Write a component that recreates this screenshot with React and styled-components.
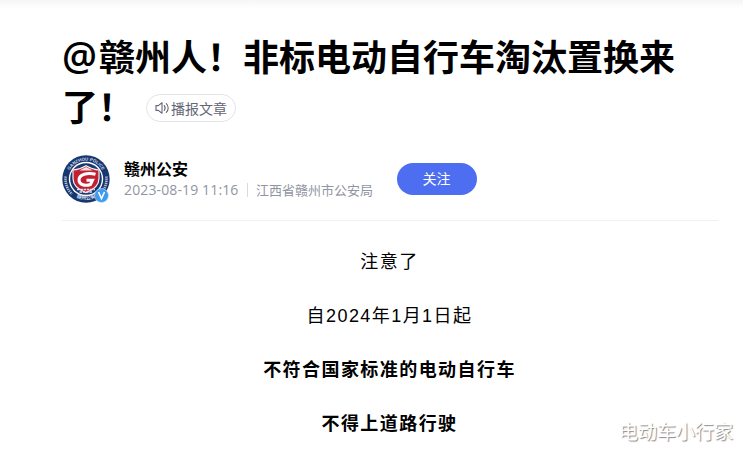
import React from 'react';
import styled, { createGlobalStyle } from "styled-components"

const GlobalStyle = createGlobalStyle`
  *{
    box-sizing: border-box;
  }
  body{
    margin: 0;
    background: #fff;
    color: #000;
    font-family: "Liberation Sans", "Noto Sans CJK SC", sans-serif;
    overflow: hidden;
  }
`

const SpeakerIcon = () => (
  <svg width="15" height="14" viewBox="0 0 15 14" fill="none" stroke="#626675" strokeWidth="1.1" strokeLinejoin="round" strokeLinecap="round">
    <path d="M1 4.6h2.3L7 1.7v10.6L3.3 9.4H1z" />
    <path d="M9.2 4.7c1.1 1.3 1.1 3.3 0 4.6" />
    <path d="M11.3 2.6c2.5 2.4 2.5 6.4 0 8.8" />
  </svg>
)

const PoliceBadge = () => (
  <svg width="48" height="48" viewBox="0 0 48 48">
    <defs>
      <path id="top-arc" d="M5.5 24a18.5 18.5 0 0 1 37 0" />
      <path id="bottom-arc" d="M12 41a21 21 0 0 0 24 0" />
    </defs>
    <circle cx="24" cy="24" r="23.7" fill="#17376f" />
    <circle cx="24" cy="24" r="17.2" fill="#fff" />
    <circle cx="24" cy="24" r="15.8" fill="#17376f" />
    <g fill="#d6dcea" fontFamily="Liberation Sans, sans-serif" fontWeight="700" fontSize="4.4">
      <text><textPath href="#top-arc" startOffset="50%" textAnchor="middle">GANZHOU POLICE</textPath></text>
      <text fontFamily="Noto Sans CJK SC, sans-serif" fontSize="5">
        <textPath href="#bottom-arc" startOffset="50%" textAnchor="middle">赣州公安</textPath>
      </text>
    </g>
    {/* lettering on both sides of the ring */}
    <g fill="none" stroke="#b4bfd6" strokeWidth="2.600" strokeDasharray="1.300 .8">
      <path d="M3.700 21.500A20.400 20.400 0 0 0 10 39" />
      <path d="M44.300 21.500A20.400 20.400 0 0 1 40 37" />
    </g>
    <path d="M11 15c5-.2 8.500-1.500 13-4.200 4.500 2.700 8 4 13 4.200v8.500c0 7-6 11.500-13 14.200C17 35 11 30.500 11 23.500z" fill="#c31f32" stroke="#f3f0f3" strokeWidth="1.200" />
    <path d="M17.500 15.500h13l-2.500-1.500-2-1-2-1-2 1-2 1z" fill="#f3dfe4" />
    <path d="M33.500 19.300C25.500 17 17 19.500 17 25c0 4.800 6 6.300 11.500 4.500l2-4.300H24.500" fill="none" stroke="#fff" strokeWidth="3" />
    <path d="M15 34.500h18M17.500 37h13" stroke="#e8e8ee" strokeWidth="1.500" strokeDasharray="2.500 .8" />
  </svg>
)

const Article = () => {
  return (
    <Page>
      <GlobalStyle />
      <TopShade />
      <Main>
        <Title>
          <At>@</At>赣州人！非标电动自行车淘汰置换来了！
          <Listen><SpeakerIcon />播报文章</Listen>
        </Title>
        <AuthorRow>
          <Avatar>
            <PoliceBadge />
            <Verified>
              <svg width="15" height="15" viewBox="0 0 15 15">
                <circle cx="7.500" cy="7.500" r="7" fill="#3d9cf0" stroke="#d9edff" strokeWidth=".6" />
                <path d="M4.500 4l3 6.500L10.500 4" fill="none" stroke="#fff" strokeWidth="1.600" />
              </svg>
            </Verified>
          </Avatar>
          <Author>
            <Name>赣州公安</Name>
            <Meta>
              <Time>2023-08-19 11:16</Time>
              <Divider />
              <span>江西省赣州市公安局</span>
            </Meta>
          </Author>
          <Follow>关注</Follow>
        </AuthorRow>
        <Content>
          <Paragraph>注意了</Paragraph>
          <Paragraph>自2024年1月1日起</Paragraph>
          <Paragraph $bold>不符合国家标准的电动自行车</Paragraph>
          <Paragraph $bold>不得上道路行驶</Paragraph>
        </Content>
      </Main>
      <Watermark>电动车小行家</Watermark>
    </Page>
  );
}

const Page = styled.div`
  position: relative;
  height: 452px;
  overflow: hidden;
`

const TopShade = styled.div`
  height: 8px;
  background: linear-gradient(#f6f6f6, #f9f9f9 40%, #fff);
`

const Main = styled.main`
  width: 656px;
  margin: 22px 0 0 62px;
`

const Title = styled.h1`
  height: 100px;
  margin: 0;
  font: 700 36px/50px "Noto Sans CJK SC", sans-serif;
  word-break: break-all;
`

const At = styled.span`
  display: inline-block;
  width: 37px;
  font-family: "Open Sans", "Noto Sans", sans-serif;
  font-size: 39px;
  font-weight: 600;
  line-height: 40px;
`

const Listen = styled.button`
  display: inline-flex;
  align-items: center;
  width: 90px;
  height: 28px;
  margin-left: 12px;
  padding: 0 0 0 8px;
  border: 1px solid #e3e4e8;
  border-radius: 14px;
  background: #fff;
  color: #626675;
  font: 400 14px/26px "Noto Sans CJK SC", sans-serif;
  vertical-align: 6px;

  svg{
    flex: none;
    margin-right: 1px;
  }
`

const AuthorRow = styled.div`
  display: flex;
  height: 91px;
  padding-top: 25px;
  border-bottom: 1px solid #f1f1f1;
`

const Avatar = styled.div`
  position: relative;
  width: 48px;
  height: 48px;
`

const Verified = styled.span`
  position: absolute;
  right: 1px;
  bottom: 0;
  width: 15px;
  height: 15px;

  svg{
    display: block;
  }
`

const Author = styled.div`
  margin-left: 14px;
  width: 273px;
  white-space: nowrap;
`

const Name = styled.div`
  padding: 2px 0;
  font: 700 16px/22px "Noto Sans CJK SC", sans-serif;
`

const Meta = styled.div`
  display: flex;
  align-items: center;
  height: 18px;
  color: #9195a3;
  font: 400 13px/18px "Noto Sans CJK SC", sans-serif;
`

const Time = styled.span`
  width: 115px;
  font-family: "Open Sans", sans-serif;
  font-size: 14px;
  letter-spacing: 0.130px;
`

const Divider = styled.i`
  width: 1px;
  height: 14px;
  margin: 0 8px;
  background: #d9dadf;
`

const Follow = styled.button`
  width: 80px;
  height: 32px;
  margin-top: 8px;
  padding: 0 1px 2px 0;
  border: 0;
  border-radius: 16px;
  background: #4e6ef2;
  color: #fff;
  font: 400 14px/30px "Noto Sans CJK SC", sans-serif;
`

const Content = styled.div`
  padding: 26px 1px 0 0;
`

const Paragraph = styled.p`
  margin: 0 0 24px;
  font-size: 18px;
  line-height: 30px;
  letter-spacing: 1.440px;
  text-align: center;
  font-weight: ${props => props.$bold ? 700 : 400};
`

const Watermark = styled.div`
  position: absolute;
  left: 619px;
  top: 417px;
  color: #fff;
  font: 400 19px/28px "Noto Sans CJK SC", sans-serif;
  text-shadow: 1px 1px 1px #888;
  white-space: nowrap;
`

export default Article;
